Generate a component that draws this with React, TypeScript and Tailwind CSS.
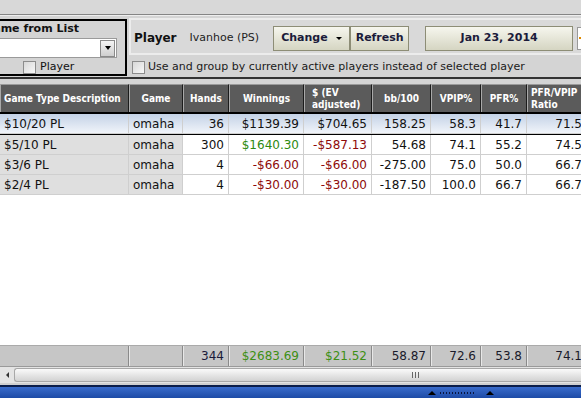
import React from 'react';

type Row = {
  desc: string;
  hands: string;
  win: string;
  ev: string;
  bb: string;
  vpip: string;
  pfr: string;
  ratio: string;
  winTone?: 'pos' | 'neg';
  evTone?: 'pos' | 'neg';
  selected?: boolean;
};

const rows: Row[] = [
  { desc: '$10/20 PL', hands: '36', win: '$1139.39', ev: '$704.65', bb: '158.25', vpip: '58.3', pfr: '41.7', ratio: '71.5', selected: true },
  { desc: '$5/10 PL', hands: '300', win: '$1640.30', ev: '-$587.13', bb: '54.68', vpip: '74.1', pfr: '55.2', ratio: '74.5', winTone: 'pos', evTone: 'neg' },
  { desc: '$3/6 PL', hands: '4', win: '-$66.00', ev: '-$66.00', bb: '-275.00', vpip: '75.0', pfr: '50.0', ratio: '66.7', winTone: 'neg', evTone: 'neg' },
  { desc: '$2/4 PL', hands: '4', win: '-$30.00', ev: '-$30.00', bb: '-187.50', vpip: '100.0', pfr: '66.7', ratio: '66.7', winTone: 'neg', evTone: 'neg' },
];

const cols = 'grid grid-cols-[129px_54px_46px_75px_68px_59px_50px_46px_60px]';

const toneClass = (t?: 'pos' | 'neg') =>
  t === 'pos' ? 'text-[#2d8a10]' : t === 'neg' ? 'text-[#8e0a0a]' : 'text-[#111]';

const Checkbox = () => (
  <span className="inline-block shrink-0 w-[13px] h-[13px] border border-[#8c8c8c] bg-linear-to-br from-[#d8d8d8] to-[#f8f8f8]" />
);

const Header = ({ children, left }: { children: React.ReactNode; left?: boolean }) => (
  <div
    className={`h-[28px] bg-[#5b5b5b] border-l border-l-[#a9a9a9] border-t border-t-[#9a9a9a] border-r border-r-[#1c1c1c] flex items-center text-white font-bold text-[10px] leading-[12px] font-['DejaVu_Sans_Condensed','DejaVu_Sans',sans-serif] ${
      left ? 'justify-start px-[3px]' : 'justify-center text-center px-[2px]'
    }`}
  >
    {children}
  </div>
);

const Cell = ({
  children,
  right,
  className = '',
}: {
  children: React.ReactNode;
  right?: boolean;
  className?: string;
}) => (
  <div
    className={`h-[20px] border-b border-r border-[#cfcfcf] flex items-center whitespace-nowrap ${
      right ? 'justify-end pr-[4px]' : 'pl-[4px]'
    } ${className}`}
  >
    {children}
  </div>
);

const Total = ({ children, className = '' }: { children?: React.ReactNode; className?: string }) => (
  <div
    className={`h-[20px] border-l border-l-[#e8e8e8] border-r border-r-[#8a8a8a] flex items-center justify-end pr-[4px] ${className}`}
  >
    {children}
  </div>
);

const TopButton = ({ children, className = '' }: { children: React.ReactNode; className?: string }) => (
  <div
    className={`h-[25px] shrink-0 border border-[#8d8d76] bg-linear-to-b from-[#f6f6ee] to-[#d5d5c2] flex items-center text-[11px] font-bold text-[#1b1b3a] ${className}`}
  >
    {children}
  </div>
);

export default function App() {
  return (
    <div className="w-[581px] h-[398px] overflow-hidden bg-[#d4d4d4] flex flex-col font-['DejaVu_Sans',sans-serif] text-[#111]">
      {/* top strip */}
      <div className="h-[14px] bg-[#d8d8d8] shrink-0" />
      <div className="h-px bg-[#858585] shrink-0" />
      <div className="h-px bg-[#eeeeee] shrink-0" />

      {/* toolbar */}
      <div className="h-[61px] shrink-0 flex">
        <div className="w-[127px] shrink-0 mt-[3px] h-[57px] border-y-2 border-r-2 border-black overflow-hidden flex flex-col">
          <div className="whitespace-nowrap text-[11px] font-bold -ml-[16px] mt-[1px] leading-[14px]">Name from List</div>
          <div className="mt-[2px] w-[117px] h-[21px] bg-white border border-[#9a9a9a] border-l-0 flex justify-end items-center pr-[1px]">
            <div className="w-[15px] h-[17px] border border-[#8a8a8a] bg-linear-to-b from-[#f4f4f4] to-[#cfcfcf] flex items-center justify-center">
              <span className="w-0 h-0 border-l-[3px] border-r-[3px] border-t-[4px] border-l-transparent border-r-transparent border-t-black" />
            </div>
          </div>
          <div className="flex items-center gap-[4px] pl-[23px] mt-[2px] text-[11px] leading-[14px]">
            <Checkbox />
            <span>Player</span>
          </div>
        </div>

        <div className="flex-1 min-w-0 overflow-hidden ml-[2px] flex flex-col">
          <div className="mt-[2px] h-[37px] border-2 border-r-0 border-[#ececec] bg-[#d9d9d9] flex items-center pl-[3px] pt-[3px] whitespace-nowrap">
            <span className="text-[12px] font-bold">Player</span>
            <span className="ml-[13px] text-[11px] text-[#222]">Ivanhoe (PS)</span>
            <TopButton className="ml-[14px] w-[77px] pl-[7px]">
              <span>Change</span>
              <span className="ml-[8px] w-0 h-0 border-l-[3px] border-r-[3px] border-t-[3px] border-l-transparent border-r-transparent border-t-black" />
            </TopButton>
            <TopButton className="w-[59px] justify-center">Refresh</TopButton>
            <TopButton className="ml-[16px] w-[148px] justify-center">Jan 23, 2014</TopButton>
            <div className="ml-[4px] shrink-0 h-[23px] w-[10px] bg-white border border-[#999] flex items-center pl-[1px]">
              <span className="w-[3px] h-[2px] bg-[#e08a00]" />
            </div>
          </div>
          <div className="flex items-center gap-[3px] pl-[3px] mt-[5px] text-[11px] leading-[14px] text-[#1a1a1a] whitespace-nowrap">
            <Checkbox />
            <span>Use and group by currently active players instead of selected player</span>
          </div>
        </div>
      </div>

      <div className="h-[2px] bg-[#333] shrink-0" />
      <div className="h-[5px] shrink-0" />

      {/* grid header */}
      <div className={`${cols} shrink-0`}>
        <Header left>Game Type Description</Header>
        <Header>Game</Header>
        <Header>Hands</Header>
        <Header>Winnings</Header>
        <Header left>
          <span className="pl-[4px]">
            $ (EV
            <br />
            adjusted)
          </span>
        </Header>
        <Header>bb/100</Header>
        <Header>VPIP%</Header>
        <Header>PFR%</Header>
        <Header left>
          <span>
            PFR/VPIP
            <br />
            Ratio
          </span>
        </Header>
      </div>
      <div className="h-[2px] bg-black shrink-0" />

      {/* grid body */}
      <div className="flex-1 bg-white overflow-hidden text-[12px]">
        {rows.map((r) => {
          const side = r.selected ? '' : 'bg-[#dfdfdf]';
          return (
            <div
              key={r.desc}
              className={`${cols} ${
                r.selected ? 'bg-linear-to-b from-[#c4d2e6] to-[#f3f6fb] border-b border-black' : ''
              }`}
            >
              <Cell className={`${side} pl-0`}>{r.desc}</Cell>
              <Cell className={side}>omaha</Cell>
              <Cell right>{r.hands}</Cell>
              <Cell right className={toneClass(r.winTone)}>{r.win}</Cell>
              <Cell right className={toneClass(r.evTone)}>{r.ev}</Cell>
              <Cell right>{r.bb}</Cell>
              <Cell right>{r.vpip}</Cell>
              <Cell right>{r.pfr}</Cell>
              <Cell right>{r.ratio}</Cell>
            </div>
          );
        })}
      </div>

      {/* totals */}
      <div className={`${cols} shrink-0 bg-[#c6c6c6] text-[12px] border-t border-[#aaaaaa]`}>
        <Total className="border-l-0" />
        <Total />
        <Total className="text-[#1a1a3a]">344</Total>
        <Total className="text-[#3d8f14]">$2683.69</Total>
        <Total className="text-[#3d8f14]">$21.52</Total>
        <Total className="text-[#1a1a2a]">58.87</Total>
        <Total className="text-[#1a1a2a]">72.6</Total>
        <Total className="text-[#1a1a2a]">53.8</Total>
        <Total className="text-[#1a1a2a]">74.1</Total>
      </div>

      {/* horizontal scrollbar */}
      <div className="h-[17px] shrink-0 bg-[#e4e4e4] border-t border-[#9a9a9a] flex">
        <div className="w-[14px] flex items-center justify-center">
          <span className="w-0 h-0 border-t-[3px] border-b-[3px] border-r-[3px] border-t-transparent border-b-transparent border-r-[#333]" />
        </div>
        <div className="flex-1 my-[1px] rounded-l-[3px] border border-r-0 border-[#a8a8a8] bg-linear-to-b from-[#fafafa] to-[#d2d2d2] flex items-center pl-[397px] gap-[2px]">
          <span className="w-px h-[6px] bg-[#666]" />
          <span className="w-px h-[6px] bg-[#666]" />
          <span className="w-px h-[6px] bg-[#666]" />
        </div>
      </div>

      <div className="h-[2px] shrink-0 bg-[#d0d0d0]" />
      {/* status bar */}
      <div className="h-[13px] shrink-0 border-t-2 border-[#0b1e4a] bg-linear-to-b from-[#3a6ccc] to-[#1d4ba6] flex items-center pl-[428px]">
        <span className="w-0 h-0 border-l-[4px] border-r-[4px] border-b-[4px] border-l-transparent border-r-transparent border-b-black" />
        <span className="ml-[4px] flex gap-[2px]">
          {Array.from({ length: 12 }).map((_, i) => (
            <span key={i} className="w-[1px] h-[2px] bg-[#0a1640]" />
          ))}
        </span>
        <span className="ml-[12px] w-0 h-0 border-l-[4px] border-r-[4px] border-b-[4px] border-l-transparent border-r-transparent border-b-black" />
      </div>
    </div>
  );
}
